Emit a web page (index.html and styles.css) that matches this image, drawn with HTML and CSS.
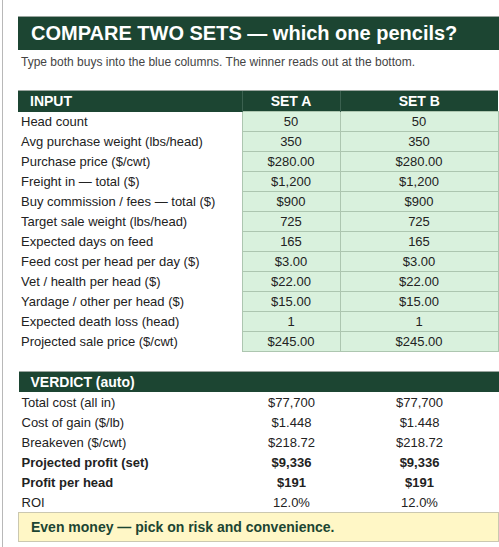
FILE: index.html
```html
<!DOCTYPE html>
<html>
  <head>
    <title>Compare Two Sets</title>
    <link rel="stylesheet" href="styles.css">
  </head>
  <body>
    <div class="sheet">
      <h1 class="sheet-title">COMPARE TWO SETS — which one pencils?</h1>
      <p class="sheet-note">Type both buys into the blue columns. The winner reads out at the bottom.</p>

      <table class="grid">
        <colgroup>
          <col class="col-label">
          <col class="col-a">
          <col class="col-b">
        </colgroup>
        <thead>
          <tr class="grid-head">
            <th class="grid-head-label">INPUT</th>
            <th>SET A</th>
            <th>SET B</th>
          </tr>
        </thead>
        <tbody class="inputs">
          <tr><td>Head count</td><td>50</td><td>50</td></tr>
          <tr><td>Avg purchase weight (lbs/head)</td><td>350</td><td>350</td></tr>
          <tr><td>Purchase price ($/cwt)</td><td>$280.00</td><td>$280.00</td></tr>
          <tr><td>Freight in — total ($)</td><td>$1,200</td><td>$1,200</td></tr>
          <tr><td>Buy commission / fees — total ($)</td><td>$900</td><td>$900</td></tr>
          <tr><td>Target sale weight (lbs/head)</td><td>725</td><td>725</td></tr>
          <tr><td>Expected days on feed</td><td>165</td><td>165</td></tr>
          <tr><td>Feed cost per head per day ($)</td><td>$3.00</td><td>$3.00</td></tr>
          <tr><td>Vet / health per head ($)</td><td>$22.00</td><td>$22.00</td></tr>
          <tr><td>Yardage / other per head ($)</td><td>$15.00</td><td>$15.00</td></tr>
          <tr><td>Expected death loss (head)</td><td>1</td><td>1</td></tr>
          <tr><td>Projected sale price ($/cwt)</td><td>$245.00</td><td>$245.00</td></tr>
        </tbody>
      </table>

      <table class="grid verdict">
        <colgroup>
          <col class="col-label">
          <col class="col-a">
          <col class="col-b">
        </colgroup>
        <thead>
          <tr class="grid-head">
            <th class="grid-head-label" colspan="3">VERDICT (auto)</th>
          </tr>
        </thead>
        <tbody class="outputs">
          <tr><td>Total cost (all in)</td><td>$77,700</td><td>$77,700</td></tr>
          <tr><td>Cost of gain ($/lb)</td><td>$1.448</td><td>$1.448</td></tr>
          <tr><td>Breakeven ($/cwt)</td><td>$218.72</td><td>$218.72</td></tr>
          <tr class="strong"><td>Projected profit (set)</td><td>$9,336</td><td>$9,336</td></tr>
          <tr class="strong"><td>Profit per head</td><td>$191</td><td>$191</td></tr>
          <tr><td>ROI</td><td>12.0%</td><td>12.0%</td></tr>
          <tr><td class="verdict-banner" colspan="3">Even money — pick on risk and convenience.</td></tr>
        </tbody>
      </table>
    </div>
  </body>
</html>
```

FILE: styles.css
```css
/* Spreadsheet-style comparison page */
body {
  margin: 0;
  padding-left: 2px;
  background: #ffffff;
  font-family: "Liberation Sans", Arial, sans-serif;
  color: #222222;
}

.sheet {
  border-left: 1px solid #b8b8b8;
  min-height: 547px;
  padding: 16px 0 0 15px;
  box-sizing: border-box;
}

.sheet-title {
  margin: 0;
  width: 490px;
  height: 34px;
  box-sizing: border-box;
  padding: 0 0 0 13px;
  background: #1c4532;
  border-top: 1px solid #9aa59f;
  color: #ffffff;
  font-size: 20px;
  font-weight: bold;
  line-height: 33px;
  white-space: nowrap;
}

.sheet-note {
  margin: 0;
  padding: 3px 0 0 3px;
  height: 40px;
  box-sizing: border-box;
  font-size: 12px;
  line-height: 18px;
  color: #444444;
}

/* Tables */
.grid {
  width: 480px;
  border-collapse: collapse;
  table-layout: fixed;
  font-size: 13px;
}

.col-label {
  width: 224px;
}

.col-a {
  width: 98px;
}

.col-b {
  width: 158px;
}

.grid-head th {
  height: 20px;
  padding: 0;
  background: #1c4532;
  color: #ffffff;
  font-size: 14px;
  font-weight: bold;
  line-height: 20px;
  text-align: center;
  border-left: 1px solid #3b6150;
  border-top: 1px solid #9aa59f;
}

.grid-head .grid-head-label {
  text-align: left;
  padding-left: 12px;
  border-left: none;
}

.grid td {
  height: 20px;
  padding: 0;
  line-height: 19px;
  text-align: center;
  white-space: nowrap;
}

.inputs td {
  height: 19px;
}

.grid td:first-child {
  text-align: left;
  padding-left: 3px;
}

.inputs td + td {
  background: #d9f1dd;
  border: 1px solid #adc6b0;
}

.verdict {
  margin-top: 19px;
}

.outputs .strong td {
  font-weight: bold;
}

.grid td.verdict-banner {
  height: 28px;
  padding-left: 12px;
  background: #fff7c6;
  border: 1px solid #cbc8b0;
  color: #1c4532;
  font-size: 14px;
  font-weight: bold;
}
```
